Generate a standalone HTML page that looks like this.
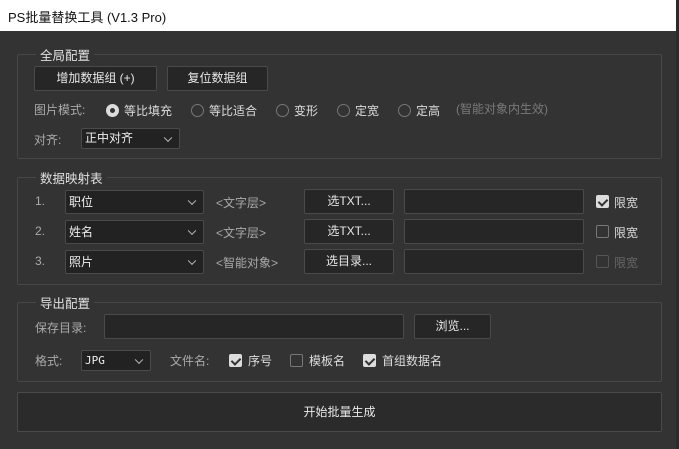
<!DOCTYPE html>
<html><head><meta charset="utf-8"><style>
*{box-sizing:border-box;margin:0;padding:0}
body{width:679px;height:449px;background:#333;position:relative;overflow:hidden;font-family:"Liberation Sans","Noto Sans CJK SC",sans-serif;font-size:12px;color:#ddd}
.a{position:absolute;white-space:nowrap}
.title{left:0;top:0;width:676px;height:31px;background:#fff;color:#111;font-size:13px;padding:7px 0 0 8px}
.edge{left:676px;top:0;width:3px;height:449px;background:#2a2a2a}
.grp{border:1px solid #474747;border-radius:2px}
.leg{background:#333;padding:0 4px;color:#e0e0e0;font-size:12.5px}
.btn{background:#262626;border:1px solid #4a4a4a;border-radius:2px;text-align:center;color:#e8e8e8}
.inp{background:#262626;border:1px solid #4a4a4a;border-radius:2px}
.sel{background:#222;border:1px solid #4a4a4a;border-radius:2px;color:#eee;padding-left:3px}
.sel:after{content:"";position:absolute;right:8px;top:50%;width:5px;height:5px;border-right:1px solid #bbb;border-bottom:1px solid #bbb;transform:translateY(-70%) rotate(45deg)}
.lbl{color:#aaa}
.rad{width:13px;height:13px;border:1.5px solid #777;border-radius:50%}
.rad.on{border:none;background:#ddd}
.rad.on:after{content:"";position:absolute;left:4px;top:4px;width:5px;height:5px;border-radius:50%;background:#333}
.cb{width:13px;height:13px;border:1.5px solid #777;border-radius:2px}
.cb.on{background:#ddd;border:none}
.cb.on:after{content:"";position:absolute;left:4px;top:1.5px;width:4px;height:7px;border-right:2px solid #333;border-bottom:2px solid #333;transform:rotate(45deg)}
.dis{border-color:#555}
</style></head><body>
<div class="a title">PS批量替换工具 (V1.3 Pro)</div>
<div class="a edge"></div>

<div class="a grp" style="left:17px;top:54px;width:645px;height:105px"></div>
<div class="a leg" style="left:36px;top:45px">全局配置</div>
<div class="a btn" style="left:34px;top:66px;width:123px;height:25px;line-height:23px">增加数据组 (+)</div>
<div class="a btn" style="left:167px;top:66px;width:101px;height:25px;line-height:23px">复位数据组</div>
<div class="a lbl" style="left:34px;top:101px">图片模式:</div>
<div class="a rad on" style="left:106px;top:104px"></div><div class="a" style="left:124px;top:102px">等比填充</div>
<div class="a rad" style="left:191px;top:104px"></div><div class="a" style="left:209px;top:102px">等比适合</div>
<div class="a rad" style="left:276px;top:104px"></div><div class="a" style="left:294px;top:102px">变形</div>
<div class="a rad" style="left:337px;top:104px"></div><div class="a" style="left:355px;top:102px">定宽</div>
<div class="a rad" style="left:398px;top:104px"></div><div class="a" style="left:416px;top:102px">定高</div>
<div class="a" style="left:456px;top:100px;color:#7a7a7a">(智能对象内生效)</div>
<div class="a lbl" style="left:34px;top:131px">对齐:</div>
<div class="a sel" style="left:81px;top:128px;width:99px;height:21px;line-height:19px">正中对齐</div>

<div class="a grp" style="left:17px;top:177px;width:645px;height:108px"></div>
<div class="a leg" style="left:36px;top:168px">数据映射表</div>

<div class="a lbl" style="left:35px;top:194px">1.</div>
<div class="a sel" style="left:65px;top:190px;width:139px;height:24px;line-height:22px">职位</div>
<div class="a lbl" style="left:216px;top:194px">&lt;文字层&gt;</div>
<div class="a btn" style="left:304px;top:189px;width:90px;height:25px;line-height:23px">选TXT...</div>
<div class="a inp" style="left:404px;top:189px;width:180px;height:25px"></div>
<div class="a cb on" style="left:596px;top:195px"></div><div class="a" style="left:614px;top:194px">限宽</div>

<div class="a lbl" style="left:35px;top:224px">2.</div>
<div class="a sel" style="left:65px;top:220px;width:139px;height:24px;line-height:22px">姓名</div>
<div class="a lbl" style="left:216px;top:224px">&lt;文字层&gt;</div>
<div class="a btn" style="left:304px;top:219px;width:90px;height:25px;line-height:23px">选TXT...</div>
<div class="a inp" style="left:404px;top:219px;width:180px;height:25px"></div>
<div class="a cb" style="left:596px;top:225px"></div><div class="a" style="left:614px;top:224px">限宽</div>

<div class="a lbl" style="left:35px;top:254px">3.</div>
<div class="a sel" style="left:65px;top:250px;width:139px;height:24px;line-height:22px">照片</div>
<div class="a lbl" style="left:216px;top:254px">&lt;智能对象&gt;</div>
<div class="a btn" style="left:304px;top:249px;width:90px;height:25px;line-height:23px">选目录...</div>
<div class="a inp" style="left:404px;top:249px;width:180px;height:25px"></div>
<div class="a cb dis" style="left:596px;top:255px"></div><div class="a" style="left:614px;top:254px;color:#666">限宽</div>

<div class="a grp" style="left:17px;top:302px;width:645px;height:80px"></div>
<div class="a leg" style="left:36px;top:293px">导出配置</div>
<div class="a lbl" style="left:35px;top:319px">保存目录:</div>
<div class="a inp" style="left:104px;top:314px;width:300px;height:25px"></div>
<div class="a btn" style="left:414px;top:314px;width:77px;height:25px;line-height:23px">浏览...</div>
<div class="a lbl" style="left:35px;top:352px">格式:</div>
<div class="a sel" style="left:81px;top:350px;width:70px;height:21px;line-height:19px;font-family:'DejaVu Sans Mono',monospace;font-size:11px">JPG</div>
<div class="a lbl" style="left:170px;top:352px">文件名:</div>
<div class="a cb on" style="left:229px;top:354px"></div><div class="a" style="left:248px;top:352px">序号</div>
<div class="a cb" style="left:290px;top:354px"></div><div class="a" style="left:309px;top:352px">模板名</div>
<div class="a cb on" style="left:363px;top:354px"></div><div class="a" style="left:382px;top:352px">首组数据名</div>

<div class="a btn" style="left:17px;top:392px;width:645px;height:40px;line-height:38px;background:#2b2b2b">开始批量生成</div>
</body></html>
